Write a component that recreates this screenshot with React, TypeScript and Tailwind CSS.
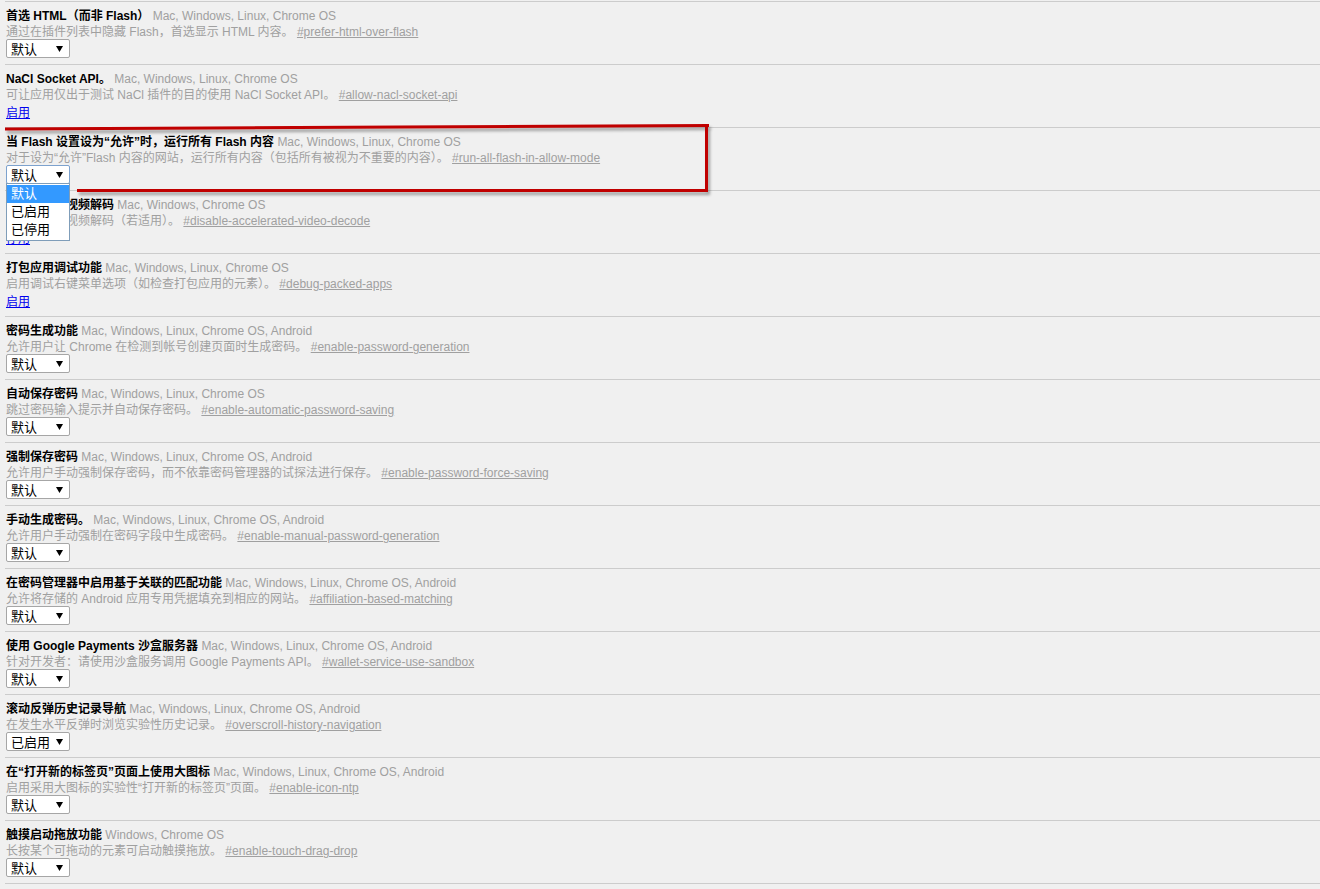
import React from 'react';

type Flag = {
  title: string;
  platforms: string;
  desc: string;
  hash: string;
  control: 'select' | 'link';
  value?: string;
  open?: boolean;
};

const FLAGS: Flag[] = [
  { title: '首选 HTML（而非 Flash）', platforms: 'Mac, Windows, Linux, Chrome OS', desc: '通过在插件列表中隐藏 Flash，首选显示 HTML 内容。', hash: '#prefer-html-over-flash', control: 'select', value: '默认' },
  { title: 'NaCl Socket API。', platforms: 'Mac, Windows, Linux, Chrome OS', desc: '可让应用仅出于测试 NaCl 插件的目的使用 NaCl Socket API。', hash: '#allow-nacl-socket-api', control: 'link', value: '启用' },
  { title: '当 Flash 设置设为“允许”时，运行所有 Flash 内容', platforms: 'Mac, Windows, Linux, Chrome OS', desc: '对于设为“允许”Flash 内容的网站，运行所有内容（包括所有被视为不重要的内容）。', hash: '#run-all-flash-in-allow-mode', control: 'select', value: '默认', open: true },
  { title: '停用加速的视频解码', platforms: 'Mac, Windows, Chrome OS', desc: '停用加速的视频解码（若适用）。', hash: '#disable-accelerated-video-decode', control: 'link', value: '停用' },
  { title: '打包应用调试功能', platforms: 'Mac, Windows, Linux, Chrome OS', desc: '启用调试右键菜单选项（如检查打包应用的元素）。', hash: '#debug-packed-apps', control: 'link', value: '启用' },
  { title: '密码生成功能', platforms: 'Mac, Windows, Linux, Chrome OS, Android', desc: '允许用户让 Chrome 在检测到帐号创建页面时生成密码。', hash: '#enable-password-generation', control: 'select', value: '默认' },
  { title: '自动保存密码', platforms: 'Mac, Windows, Linux, Chrome OS', desc: '跳过密码输入提示并自动保存密码。', hash: '#enable-automatic-password-saving', control: 'select', value: '默认' },
  { title: '强制保存密码', platforms: 'Mac, Windows, Linux, Chrome OS, Android', desc: '允许用户手动强制保存密码，而不依靠密码管理器的试探法进行保存。', hash: '#enable-password-force-saving', control: 'select', value: '默认' },
  { title: '手动生成密码。', platforms: 'Mac, Windows, Linux, Chrome OS, Android', desc: '允许用户手动强制在密码字段中生成密码。', hash: '#enable-manual-password-generation', control: 'select', value: '默认' },
  { title: '在密码管理器中启用基于关联的匹配功能', platforms: 'Mac, Windows, Linux, Chrome OS, Android', desc: '允许将存储的 Android 应用专用凭据填充到相应的网站。', hash: '#affiliation-based-matching', control: 'select', value: '默认' },
  { title: '使用 Google Payments 沙盒服务器', platforms: 'Mac, Windows, Linux, Chrome OS, Android', desc: '针对开发者：请使用沙盒服务调用 Google Payments API。', hash: '#wallet-service-use-sandbox', control: 'select', value: '默认' },
  { title: '滚动反弹历史记录导航', platforms: 'Mac, Windows, Linux, Chrome OS, Android', desc: '在发生水平反弹时浏览实验性历史记录。', hash: '#overscroll-history-navigation', control: 'select', value: '已启用' },
  { title: '在“打开新的标签页”页面上使用大图标', platforms: 'Mac, Windows, Linux, Chrome OS, Android', desc: '启用采用大图标的实验性“打开新的标签页”页面。', hash: '#enable-icon-ntp', control: 'select', value: '默认' },
  { title: '触摸启动拖放功能', platforms: 'Windows, Chrome OS', desc: '长按某个可拖动的元素可启动触摸拖放。', hash: '#enable-touch-drag-drop', control: 'select', value: '默认' },
];

const OPTIONS = ['默认', '已启用', '已停用'];

const Arrow = () => (
  <svg width="7" height="6" viewBox="0 0 7 6" className="shrink-0">
    <polygon points="0,0 7,0 3.5,6" fill="#000" />
  </svg>
);

const Select = ({ value, open }: { value: string; open?: boolean }) => (
  <div
    className={`relative w-[64px] h-[19px] rounded-[2px] border bg-white flex items-center justify-between pl-[4px] pr-[6px] text-[13px] leading-[17px] text-black ${
      open ? 'border-[#7da2ce]' : 'border-[#a6a6a6]'
    }`}
  >
    <span className="pt-px">{value}</span>
    <Arrow />
    {open && (
      <div className="absolute left-[-1px] top-[17px] z-10 w-[64px] border border-[#7f9db9] bg-white py-px">
        {OPTIONS.map((o, i) => (
          <div
            key={o}
            className={`h-[18px] pl-[4px] text-[13px] leading-[18px] ${i === 0 ? 'bg-[#3399ff] text-white' : 'text-black'}`}
          >
            {o}
          </div>
        ))}
      </div>
    )}
  </div>
);

const FlagRow = ({ flag }: { flag: Flag }) => (
  <div className="h-[63px] border-t border-[#cccccc] pl-px pt-[6px]">
    <div className="text-xs leading-4 whitespace-nowrap">
      <span className="font-bold text-black">{flag.title}</span>{' '}
      <span className="text-[#a0a0a0]">{flag.platforms}</span>
    </div>
    <div className="-mb-px text-xs leading-4 whitespace-nowrap text-[#a0a0a0]">
      {flag.desc} <span className="underline">{flag.hash}</span>
    </div>
    {flag.control === 'select' ? (
      <Select value={flag.value || '默认'} open={flag.open} />
    ) : (
      <div className="mt-[3px] text-xs leading-4">
        <span className="text-[#0000ee] underline">{flag.value}</span>
      </div>
    )}
  </div>
);

// hand-drawn red highlight box on top of the screenshot
const Annotation = () => (
  <svg className="pointer-events-none absolute left-0 top-0 z-20" width="1320" height="889">
    <defs>
      <filter id="shadow" x="-5%" y="-50%" width="110%" height="200%">
        <feDropShadow dx="2" dy="3" stdDeviation="1.5" floodColor="#000" floodOpacity="0.35" />
      </filter>
    </defs>
    <g filter="url(#shadow)" stroke="#c00000" strokeWidth="3" fill="none">
      <polyline points="5,129 400,127 709,125.5" />
      <line x1="706.5" y1="125" x2="706.5" y2="191.5" />
      <line x1="77" y1="190.5" x2="708" y2="190.5" />
    </g>
  </svg>
);

export default function App() {
  return (
    <div className="relative h-[889px] w-full overflow-hidden bg-[#f0f0f0] pl-[5px] pt-px font-['Liberation_Sans','Noto_Sans_CJK_SC',sans-serif]">
      {FLAGS.map((f) => (
        <FlagRow key={f.hash} flag={f} />
      ))}
      <div className="border-t border-[#cccccc]" />
      <Annotation />
    </div>
  );
}
